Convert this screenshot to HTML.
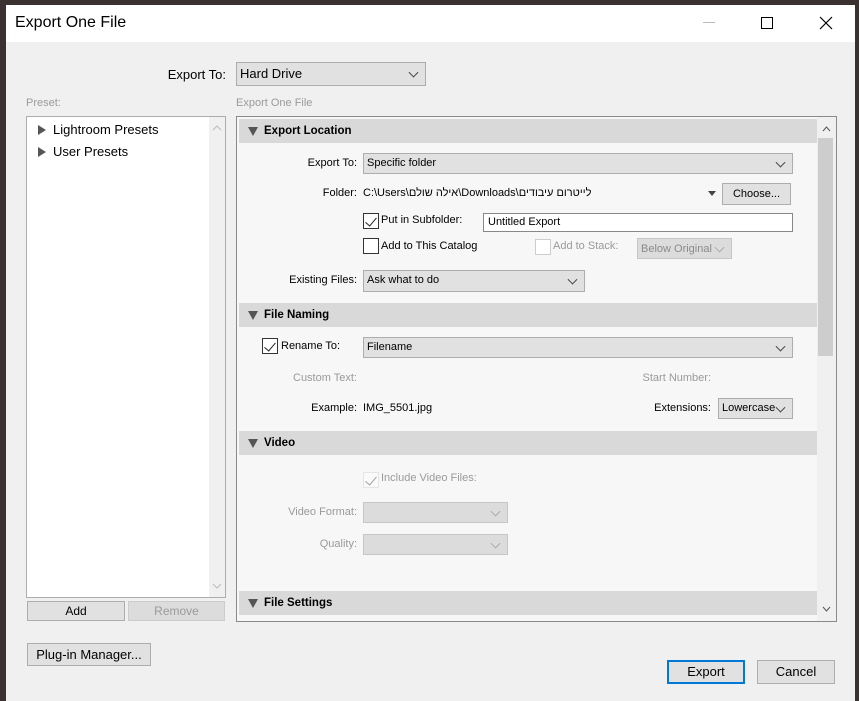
<!DOCTYPE html>
<html><head><meta charset="utf-8"><style>
*{box-sizing:border-box;margin:0;padding:0}
body{width:859px;height:701px;overflow:hidden;background:#3a3230;font-family:"Liberation Sans","Noto Sans CJK SC",sans-serif;font-size:11px;color:#000;position:relative}
.a{position:absolute;white-space:nowrap}
.dlg{position:absolute;left:6px;top:5px;width:849px;height:696px;background:#f0f0f0}
.title{position:absolute;left:6px;top:5px;width:849px;height:37px;background:#fff}
.sel{position:absolute;background:#e1e1e1;border:1px solid #adadad;padding-left:3px;line-height:19px}
.sel::after{content:"";position:absolute;right:8px;top:50%;width:6px;height:6px;border-right:1px solid #444;border-bottom:1px solid #444;transform:translateY(-70%) rotate(45deg)}
.dis{color:#8a8a8a;background:#dcdcdc;border-color:#c6c6c6}
.dis::after{border-color:#aaa}
.btn{position:absolute;background:#e1e1e1;border:1px solid #adadad;text-align:center}
.cb{position:absolute;width:16px;height:16px;border:1px solid #333;background:#fff}
.cb.on::after{content:"";position:absolute;left:4px;top:1px;width:5px;height:10px;border-right:1.5px solid #222;border-bottom:1.5px solid #222;transform:rotate(40deg)}
.hdr{position:absolute;left:239px;width:578px;height:24px;background:#d9d9d9;font-weight:bold;line-height:24px;padding-left:25px;font-size:11.5px}
.hdr::before{content:"";position:absolute;left:9px;top:8px;border-left:5px solid transparent;border-right:5px solid transparent;border-top:9px solid #555}
.r{text-align:right}
.g{color:#9a9a9a}
</style></head><body>
<div class="dlg"></div>
<div class="title"></div>
<div class="a" style="left:15px;top:14px;font-size:16px">Export One File</div>
<div class="a" style="left:703px;top:22px;width:12px;height:1px;background:#bbb"></div>
<div class="a" style="left:761px;top:17px;width:12px;height:12px;border:1px solid #000"></div>
<svg class="a" style="left:819px;top:16px" width="14" height="14"><path d="M1 1L13 13M13 1L1 13" stroke="#000" stroke-width="1.2"/></svg>

<div class="a r" style="left:150px;top:67px;width:76px;font-size:13px">Export To:</div>
<div class="sel" style="left:236px;top:62px;width:190px;height:24px;line-height:22px;font-size:13px">Hard Drive</div>
<div class="a g" style="left:26px;top:97px;font-size:11px">Preset:</div>
<div class="a g" style="left:236px;top:97px;font-size:11px">Export One File</div>

<div class="a" style="left:26px;top:116px;width:200px;height:482px;background:#fff;border:1px solid #adadad"></div>
<div class="a" style="left:209px;top:117px;width:16px;height:480px;background:#f0f0f0"></div>
<svg class="a" style="left:212px;top:125px" width="10" height="6"><path d="M1 5L5 1L9 5" stroke="#bbb" fill="none"/></svg>
<svg class="a" style="left:212px;top:583px" width="10" height="6"><path d="M1 1L5 5L9 1" stroke="#bbb" fill="none"/></svg>
<div class="a" style="left:38px;top:125px;border-top:5px solid transparent;border-bottom:5px solid transparent;border-left:8px solid #555"></div>
<div class="a" style="left:53px;top:122px;font-size:13px">Lightroom Presets</div>
<div class="a" style="left:38px;top:147px;border-top:5px solid transparent;border-bottom:5px solid transparent;border-left:8px solid #555"></div>
<div class="a" style="left:53px;top:144px;font-size:13px">User Presets</div>
<div class="btn" style="left:27px;top:601px;width:98px;height:20px;line-height:18px;font-size:12px">Add</div>
<div class="btn g" style="left:128px;top:601px;width:97px;height:20px;line-height:18px;font-size:12px;background:#dcdcdc;border-color:#ccc">Remove</div>

<div class="a" style="left:236px;top:116px;width:601px;height:506px;background:#f7f7f7;border:1px solid #8a8a8a"></div>
<div class="a" style="left:817px;top:117px;width:19px;height:504px;background:#f0f0f0"></div>
<div class="a" style="left:818px;top:138px;width:15px;height:218px;background:#cdcdcd"></div>
<svg class="a" style="left:822px;top:126px" width="9" height="6"><path d="M1 5L4.5 1L8 5" stroke="#555" fill="none"/></svg>
<svg class="a" style="left:822px;top:606px" width="9" height="6"><path d="M1 1L4.5 5L8 1" stroke="#555" fill="none"/></svg>

<div class="hdr" style="top:119px">Export Location</div>
<div class="a r" style="left:260px;top:157px;width:97px">Export To:</div>
<div class="sel" style="left:363px;top:153px;width:430px;height:21px">Specific folder</div>
<div class="a r" style="left:260px;top:187px;width:97px">Folder:</div>
<div class="a" style="left:363px;top:187px">C:\Users\<span dir="rtl">אילה שולם</span>\Downloads\<span dir="rtl">לייטרום עיבודים</span></div>
<div class="a" style="left:708px;top:191px;border-left:4px solid transparent;border-right:4px solid transparent;border-top:5px solid #444"></div>
<div class="btn" style="left:722px;top:183px;width:69px;height:22px;line-height:20px">Choose...</div>
<div class="cb on" style="left:363px;top:213px"></div>
<div class="a" style="left:381px;top:214px">Put in Subfolder:</div>
<div class="a" style="left:483px;top:213px;width:310px;height:19px;background:#fff;border:1px solid #888;padding-left:4px;line-height:17px">Untitled Export</div>
<div class="cb" style="left:363px;top:238px"></div>
<div class="a" style="left:381px;top:240px">Add to This Catalog</div>
<div class="cb" style="left:535px;top:239px;border-color:#ccc"></div>
<div class="a g" style="left:553px;top:240px">Add to Stack:</div>
<div class="sel dis" style="left:637px;top:238px;width:95px;height:21px;line-height:21px">Below Original</div>
<div class="a r" style="left:260px;top:274px;width:97px">Existing Files:</div>
<div class="sel" style="left:363px;top:270px;width:222px;height:22px">Ask what to do</div>

<div class="hdr" style="top:303px">File Naming</div>
<div class="cb on" style="left:262px;top:338px"></div>
<div class="a" style="left:281px;top:340px">Rename To:</div>
<div class="sel" style="left:363px;top:337px;width:430px;height:21px">Filename</div>
<div class="a r g" style="left:260px;top:372px;width:97px">Custom Text:</div>
<div class="a r g" style="left:600px;top:372px;width:111px">Start Number:</div>
<div class="a r" style="left:260px;top:402px;width:97px">Example:</div>
<div class="a" style="left:363px;top:402px">IMG_5501.jpg</div>
<div class="a r" style="left:600px;top:402px;width:111px">Extensions:</div>
<div class="sel" style="left:718px;top:398px;width:75px;height:21px;overflow:hidden;line-height:19px">Lowercase</div>

<div class="hdr" style="top:431px">Video</div>
<div class="cb on" style="left:363px;top:472px;border-color:#ccc;opacity:.4"></div>
<div class="a g" style="left:381px;top:472px">Include Video Files:</div>
<div class="a r g" style="left:260px;top:506px;width:97px">Video Format:</div>
<div class="sel dis" style="left:363px;top:502px;width:145px;height:21px"></div>
<div class="a r g" style="left:260px;top:538px;width:97px">Quality:</div>
<div class="sel dis" style="left:363px;top:534px;width:145px;height:21px"></div>

<div class="hdr" style="top:591px">File Settings</div>

<div class="btn" style="left:27px;top:643px;width:124px;height:23px;line-height:21px;font-size:13px">Plug-in Manager...</div>
<div class="btn" style="left:667px;top:660px;width:78px;height:24px;line-height:20px;font-size:13px;border:2px solid #0078d7">Export</div>
<div class="btn" style="left:757px;top:660px;width:78px;height:24px;line-height:22px;font-size:13px">Cancel</div>
</body></html>
